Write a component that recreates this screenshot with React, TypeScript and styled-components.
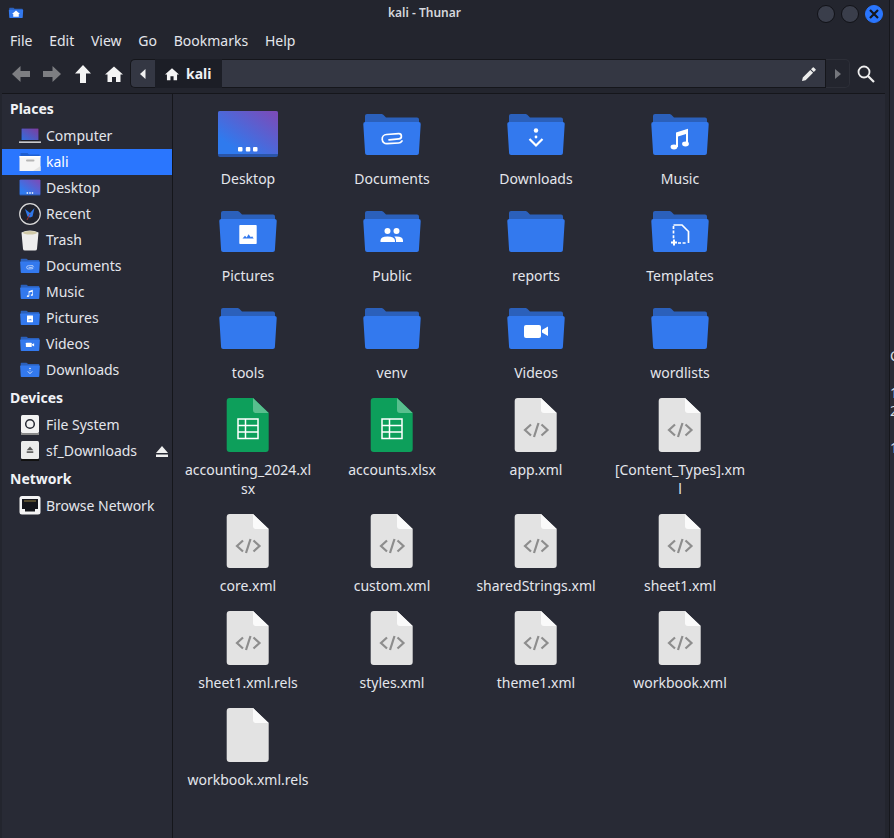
import { ReactNode } from "react";
import styled, { createGlobalStyle } from "styled-components";

const GlobalStyle = createGlobalStyle`
    html, body {
        margin: 0;
        padding: 0;
        background-color: #2a2c36;
    }
    * {
        box-sizing: border-box;
    }
`;

const FolderIcon = ({ size = 64, children }: { size?: number; children?: ReactNode }) => (
    <svg width={size} height={size} viewBox="0 0 64 64">
        <path d="M5 13q0-2 2-2h14.500q1 0 1.800.8l2.700 2.700h31q2 0 2 2v6H5z" fill="#2b60bb" />
        <path d="M5.300 19h53.400q2.200 0 2 2.200l-1.800 29q-.1 1.800-2 1.800H7.100q-1.900 0-2-1.800l-1.800-29q-.2-2.200 2-2.200z" fill="#3379ee" />
        {children}
    </svg>
);

const DesktopIcon = ({ size = 64 }: { size?: number }) => (
    <svg width={size} height={size} viewBox="0 0 64 64">
        <defs>
            <linearGradient id="desk" x1="0" y1="1" x2="1" y2="0">
                <stop offset="0.2" stopColor="#2f7aee" />
                <stop offset="1" stopColor="#7f49b6" />
            </linearGradient>
        </defs>
        <rect x="2" y="8" width="60" height="46" rx="2" fill="#2a55a8" />
        <path d="M2 10q0-2 2-2h56q2 0 2 2v41H2z" fill="url(#desk)" />
        <rect x="22" y="44" width="4.500" height="4.500" rx="1" fill="#fff" />
        <rect x="29.800" y="44" width="4.500" height="4.500" rx="1" fill="#fff" />
        <rect x="37" y="44" width="4.500" height="4.500" rx="1" fill="#fff" />
    </svg>
);

const DocIcon = ({ children }: { children?: ReactNode }) => (
    <svg width="64" height="64" viewBox="0 0 64 64">
        <path d="M13.700 4H37l15.700 15v36q0 3-3 3h-36q-3 0-3-3V7q0-3 3-3z" fill="#e3e3e3" />
        <path d="M37 4l15.700 15H40q-3 0-3-3z" fill="#fafafa" />
        {children}
    </svg>
);

const CodeGlyph = () => (
    <g fill="none" stroke="#8d8d8d" strokeWidth="2.200">
        <path d="M27 30.500l-6 5.500 6 5.500" />
        <path d="M37.500 30.500l6 5.500-6 5.500" />
        <path d="M34.500 29l-4.500 14" />
    </g>
);

const SheetIcon = () => (
    <svg width="64" height="64" viewBox="0 0 64 64">
        <path d="M13.700 4H37l15.700 15v36q0 3-3 3h-36q-3 0-3-3V7q0-3 3-3z" fill="#0d9f5b" />
        <path d="M37 4l15.700 15H40q-3 0-3-3z" fill="#58bf8e" />
        <g fill="none" stroke="#fff" strokeWidth="1.500">
            <rect x="22" y="25" width="20" height="19.500" />
            <path d="M22 31.500h20M22 38h20M29.500 25v19.500" />
        </g>
    </svg>
);

const PaperclipGlyph = () => (
    <path d="M29 36.800L39 35.800a2.600 2.600 0 0 0-.4-5.200L26.500 31.500a4.600 4.600 0 0 0 .6 9.200L38.500 40a4.600 4.600 0 0 0 3.500-2" fill="none" stroke="#fff" strokeWidth="1.700" strokeLinecap="round" />
);

const DownloadGlyph = () => (
    <g>
        <circle cx="32" cy="27.500" r="2.200" fill="#fff" />
        <circle cx="32" cy="34" r="1.400" fill="#fff" />
        <path d="M25.500 36l6.500 6.500 6.500-6.500" fill="none" stroke="#fff" strokeWidth="2.200" />
    </g>
);

const MusicGlyph = () => (
    <g>
        <path d="M28 29.500l12-3.800V41h-2V31l-8 2.400V44h-2V30.800q0-.9 0-1.300z" fill="#fff" />
        <ellipse cx="26" cy="44" rx="3.400" ry="2.400" fill="#fff" />
        <ellipse cx="37.500" cy="41" rx="3.400" ry="2.400" fill="#fff" />
    </g>
);

const PictureGlyph = () => (
    <g>
        <rect x="23.300" y="25" width="17.400" height="19" rx="0.800" fill="#fff" />
        <path d="M26.500 38.500l2.500-2.700 1.700 1.600 1.800-3.200 2.400 3 1.200-1 1.600 2.300z" fill="#3379ee" />
    </g>
);

const PeopleGlyph = () => (
    <g fill="#fff">
        <circle cx="27.500" cy="31" r="3" />
        <circle cx="36.500" cy="31" r="3" />
        <path d="M20.500 42v-1.500q0-4 7-4t7.500 4V42z" />
        <path d="M36 42v-1.500q0-2.500-1.700-4 .9-.1 2.200-.1 6.500 0 6.500 4V42z" />
    </g>
);

const TemplateGlyph = () => (
    <g fill="none" stroke="#fff" strokeWidth="1.700">
        <path d="M25.500 25h8.500l6.500 6.500V43" />
        <path d="M25.500 26v13M30 43h9" strokeDasharray="3 1.600" />
        <path d="M23 42.500h6M26 39.500v6" strokeWidth="2" />
    </g>
);

const VideoGlyph = () => (
    <g fill="#fff">
        <rect x="20" y="28" width="17" height="13" rx="2" />
        <path d="M38 33l6-3.500v9.500l-6-3.500z" />
    </g>
);

const LaptopIcon = () => (
    <svg width="22" height="22" viewBox="0 0 22 22">
        <defs>
            <linearGradient id="lap" x1="0" y1="1" x2="1" y2="0">
                <stop offset="0" stopColor="#2f6fe0" />
                <stop offset="1" stopColor="#7f3c9c" />
            </linearGradient>
        </defs>
        <rect x="2" y="3" width="18" height="13" fill="#1d1e26" />
        <rect x="2.500" y="3.500" width="17" height="11.500" fill="url(#lap)" />
        <rect x="0" y="16.500" width="22" height="1.300" fill="#f2f2f2" />
    </svg>
);

const HomeFolderIcon = () => (
    <svg width="22" height="22" viewBox="0 0 22 22">
        <path d="M1.500 2h7l1.500 1.500h10.500V7h-19z" fill="#1f5fd0" />
        <rect x="0.500" y="5" width="21" height="15" fill="#f5f5f5" />
        <path d="M0.500 6.500h21V5h-21z" fill="#fff" />
        <rect x="7" y="8.500" width="8.500" height="2" rx="1" fill="#b5b5b5" />
        <path d="M14 20l7.500-5v5z" fill="#e3e3e3" />
    </svg>
);

const ClockIcon = () => (
    <svg width="22" height="22" viewBox="0 0 22 22">
        <circle cx="11" cy="11" r="10.300" fill="#20222c" stroke="#d8d8d8" strokeWidth="1.200" />
        <path d="M6 6l5 4 4.500-5-2 8.500-2.500 1-2.500-1z" fill="#2f78ea" />
        <path d="M11 11l-3 6" stroke="#b03030" strokeWidth="0.900" />
    </svg>
);

const TrashIcon = () => (
    <svg width="22" height="22" viewBox="0 0 22 22">
        <path d="M2.500 3.500Q11 -.5 19.500 3.500L18 20q-.2 1.500-2 1.500H6q-1.800 0-2-1.500z" fill="#eeeeee" />
        <ellipse cx="11" cy="3.700" rx="7" ry="1.800" fill="#d0c9a8" />
    </svg>
);

const DiskIcon = () => (
    <svg width="22" height="22" viewBox="0 0 22 22">
        <rect x="2" y="1" width="18" height="18" rx="1.500" fill="#f2f2f2" />
        <rect x="2" y="19" width="18" height="2" fill="#8a8a8a" />
        <circle cx="11" cy="10" r="4.300" fill="none" stroke="#262933" strokeWidth="1.500" />
    </svg>
);

const MountIcon = () => (
    <svg width="22" height="22" viewBox="0 0 22 22">
        <rect x="2" y="1" width="18" height="18" rx="1.500" fill="#ececec" />
        <rect x="2" y="19" width="18" height="2" fill="#111" />
        <path d="M11 6.500l3.300 3.800H7.700z" fill="#555" />
        <rect x="7.700" y="11.300" width="6.600" height="1.600" fill="#555" />
    </svg>
);

const NetworkIcon = () => (
    <svg width="22" height="22" viewBox="0 0 22 22">
        <rect x="0.500" y="1" width="21" height="18.500" rx="2.500" fill="#f4f4f4" />
        <path d="M3 4h16v10h-3v2.500H6V14H3z" fill="#15161b" />
        <path d="M6 5v2M8 5v2M10 5v2M12 5v2M14 5v2M16 5v2" stroke="#b49a4a" strokeWidth="0.800" />
    </svg>
);

const Arrow = ({ rotate, color }: { rotate: number; color: string }) => (
    <svg width="18" height="18" viewBox="0 0 18 18" style={{ transform: `rotate(${rotate}deg)` }}>
        <path d="M0 9L8.500 1v5H18v6H8.500v5z" fill={color} />
    </svg>
);

const HomeGlyph = ({ size }: { size: number }) => (
    <svg width={size} height={size} viewBox="0 0 18 18">
        <path d="M9 1.500L18 9.500h-2.500V17H11v-5H7v5H2.500V9.500H0z" fill="#f4f4f4" />
    </svg>
);

const places = [
    { name: "Computer", icon: <LaptopIcon /> },
    { name: "kali", icon: <HomeFolderIcon />, active: true },
    { name: "Desktop", icon: <DesktopIcon size={22} /> },
    { name: "Recent", icon: <ClockIcon /> },
    { name: "Trash", icon: <TrashIcon /> },
    { name: "Documents", icon: <FolderIcon size={22}><PaperclipGlyph /></FolderIcon> },
    { name: "Music", icon: <FolderIcon size={22}><MusicGlyph /></FolderIcon> },
    { name: "Pictures", icon: <FolderIcon size={22}><PictureGlyph /></FolderIcon> },
    { name: "Videos", icon: <FolderIcon size={22}><VideoGlyph /></FolderIcon> },
    { name: "Downloads", icon: <FolderIcon size={22}><DownloadGlyph /></FolderIcon> },
];

const files = [
    { name: "Desktop", icon: <DesktopIcon /> },
    { name: "Documents", icon: <FolderIcon><PaperclipGlyph /></FolderIcon> },
    { name: "Downloads", icon: <FolderIcon><DownloadGlyph /></FolderIcon> },
    { name: "Music", icon: <FolderIcon><MusicGlyph /></FolderIcon> },
    { name: "Pictures", icon: <FolderIcon><PictureGlyph /></FolderIcon> },
    { name: "Public", icon: <FolderIcon><PeopleGlyph /></FolderIcon> },
    { name: "reports", icon: <FolderIcon /> },
    { name: "Templates", icon: <FolderIcon><TemplateGlyph /></FolderIcon> },
    { name: "tools", icon: <FolderIcon /> },
    { name: "venv", icon: <FolderIcon /> },
    { name: "Videos", icon: <FolderIcon><VideoGlyph /></FolderIcon> },
    { name: "wordlists", icon: <FolderIcon /> },
    { name: "accounting_2024.xlsx", icon: <SheetIcon /> },
    { name: "accounts.xlsx", icon: <SheetIcon /> },
    { name: "app.xml", icon: <DocIcon><CodeGlyph /></DocIcon> },
    { name: "[Content_Types].xml", icon: <DocIcon><CodeGlyph /></DocIcon> },
    { name: "core.xml", icon: <DocIcon><CodeGlyph /></DocIcon> },
    { name: "custom.xml", icon: <DocIcon><CodeGlyph /></DocIcon> },
    { name: "sharedStrings.xml", icon: <DocIcon><CodeGlyph /></DocIcon> },
    { name: "sheet1.xml", icon: <DocIcon><CodeGlyph /></DocIcon> },
    { name: "sheet1.xml.rels", icon: <DocIcon><CodeGlyph /></DocIcon> },
    { name: "styles.xml", icon: <DocIcon><CodeGlyph /></DocIcon> },
    { name: "theme1.xml", icon: <DocIcon><CodeGlyph /></DocIcon> },
    { name: "workbook.xml", icon: <DocIcon><CodeGlyph /></DocIcon> },
    { name: "workbook.xml.rels", icon: <DocIcon /> },
];

const App = () => {
    return (
        <Screen>
            <GlobalStyle />
            <Window>
                <TitleBar>
                    <TitleIcon>
                        <FolderIcon size={16}>
                            <path d="M32 22L48 36h-5v11H21V36h-5z" fill="#fff" />
                        </FolderIcon>
                    </TitleIcon>
                    <Title>kali - Thunar</Title>
                    <WindowButtons>
                        <WindowButton />
                        <WindowButton />
                        <WindowButton $close>
                            <svg width="10" height="10" viewBox="0 0 10 10">
                                <path d="M1 1l8 8M9 1l-8 8" stroke="#14161c" strokeWidth="2.200" />
                            </svg>
                        </WindowButton>
                    </WindowButtons>
                </TitleBar>
                <MenuBar>
                    {["File", "Edit", "View", "Go", "Bookmarks", "Help"].map((m) => (
                        <MenuItem key={m}>{m}</MenuItem>
                    ))}
                </MenuBar>
                <Toolbar>
                    <NavButtons>
                        <Arrow rotate={0} color="#7d7e82" />
                        <Arrow rotate={180} color="#7d7e82" />
                        <Arrow rotate={90} color="#f4f4f4" />
                        <HomeGlyph size={18} />
                    </NavButtons>
                    <PathBar>
                        <PathArrow>
                            <svg width="6" height="10" viewBox="0 0 6 10">
                                <path d="M5.500 0v10L0 5z" fill="#f0f0f0" />
                            </svg>
                        </PathArrow>
                        <PathCrumb>
                            <HomeGlyph size={14} />
                            <span>kali</span>
                        </PathCrumb>
                        <PathEntry>
                            <svg width="14" height="14" viewBox="0 0 14 14">
                                <path d="M0 14l.8-3.600 7.500-7.500 2.800 2.800-7.500 7.500zM9 2.200l1.800-1.800q.5-.4 1 0l1.800 1.800q.4.500 0 1L11.800 5z" fill="#ececec" />
                            </svg>
                        </PathEntry>
                        <PathNext>
                            <svg width="6" height="10" viewBox="0 0 6 10">
                                <path d="M0 0v10l6-5z" fill="#74767c" />
                            </svg>
                        </PathNext>
                    </PathBar>
                    <SearchButton>
                        <svg width="18" height="18" viewBox="0 0 18 18">
                            <circle cx="7" cy="7" r="5.500" fill="none" stroke="#eee" strokeWidth="1.800" />
                            <path d="M11 11l6 6" stroke="#eee" strokeWidth="2.200" />
                        </svg>
                    </SearchButton>
                </Toolbar>
                <Body>
                    <Sidebar>
                        <SideTitle>Places</SideTitle>
                        {places.map((p) => (
                            <SideRow key={p.name} $active={p.active}>
                                <SideIcon>{p.icon}</SideIcon>
                                <SideLabel>{p.name}</SideLabel>
                            </SideRow>
                        ))}
                        <SideTitle>Devices</SideTitle>
                        <SideRow>
                            <SideIcon><DiskIcon /></SideIcon>
                            <SideLabel>File System</SideLabel>
                        </SideRow>
                        <SideRow>
                            <SideIcon><MountIcon /></SideIcon>
                            <SideLabel>sf_Downloads</SideLabel>
                            <Eject>
                                <svg width="12" height="11" viewBox="0 0 12 11">
                                    <path d="M6 0l6 7H0zM0 8.500h12V11H0z" fill="#f0f0f0" />
                                </svg>
                            </Eject>
                        </SideRow>
                        <SideTitle>Network</SideTitle>
                        <SideRow>
                            <SideIcon><NetworkIcon /></SideIcon>
                            <SideLabel>Browse Network</SideLabel>
                        </SideRow>
                    </Sidebar>
                    <Main>
                        <FileGrid>
                            {files.map((f) => (
                                <FileItem key={f.name}>
                                    {f.icon}
                                    <FileName>{f.name}</FileName>
                                </FileItem>
                            ))}
                        </FileGrid>
                    </Main>
                </Body>
            </Window>
            <BehindStrip>
                <BehindLine $gap={347}>C</BehindLine>
                <BehindLine $gap={19}>1</BehindLine>
                <BehindLine $gap={0}>2</BehindLine>
                <BehindLine $gap={19}>1</BehindLine>
            </BehindStrip>
        </Screen>
    );
};

export default App;

const Screen = styled.div`
    display: flex;
    width: 894px;
    height: 838px;
    overflow: hidden;
    font-family: "Noto Sans", sans-serif;
    font-size: 14px;
    color: #e4e6ec;
`;

const Window = styled.div`
    width: 890px;
    height: 838px;
    flex-shrink: 0;
    padding: 0 4px 0 2px;
    background-color: #23252e;
    border-right: 1px solid #16171c;
    display: flex;
    flex-direction: column;
`;

const BehindStrip = styled.div`
    width: 4px;
    overflow: hidden;
    background-color: #2a2c36;
    color: #d8dce0;
`;

const BehindLine = styled.div<{ $gap: number }>`
    margin-top: ${({ $gap }) => $gap}px;
    line-height: 18px;
`;

const TitleBar = styled.div`
    height: 28px;
    flex-shrink: 0;
    display: flex;
    align-items: center;
    position: relative;
`;

const TitleIcon = styled.div`
    display: flex;
    margin: -3px 0 0 6px;
`;

const Title = styled.div`
    position: absolute;
    left: 386px;
    top: 4px;
    font-size: 12px;
    font-weight: 600;
    color: #d5d7dd;
`;

const WindowButtons = styled.div`
    margin-left: auto;
    display: flex;
    gap: 6px;
    margin-right: 2px;
`;

const WindowButton = styled.div<{ $close?: boolean }>`
    width: 18px;
    height: 18px;
    border-radius: 50%;
    border: 1px solid ${({ $close }) => ($close ? "#2a76fe" : "#111217")};
    background-color: ${({ $close }) => ($close ? "#2a76fe" : "#3a3e4b")};
    display: flex;
    align-items: center;
    justify-content: center;
`;

const MenuBar = styled.div`
    height: 24px;
    flex-shrink: 0;
    display: flex;
    align-items: center;
    gap: 16.75px;
    padding-left: 8px;
`;

const MenuItem = styled.span``;

const Toolbar = styled.div`
    height: 42px;
    flex-shrink: 0;
    padding-top: 2px;
    display: flex;
    align-items: center;
    border-bottom: 1px solid #15161b;
`;

const NavButtons = styled.div`
    display: flex;
    gap: 13px;
    padding-left: 10px;
    width: 128px;
    flex-shrink: 0;
`;

const PathBar = styled.div`
    display: flex;
    height: 29px;
    width: 720px;
    flex-shrink: 0;
`;

const PathArrow = styled.div`
    width: 25px;
    background-color: #343743;
    border: 1px solid #15161b;
    border-right: none;
    border-radius: 5px 0 0 5px;
    display: flex;
    align-items: center;
    justify-content: center;
`;

const PathCrumb = styled.div`
    width: 67px;
    background-color: #1c1e26;
    display: flex;
    align-items: center;
    gap: 7px;
    padding-left: 10px;
    font-weight: 700;
    color: #eef0f4;
`;

const PathEntry = styled.div`
    flex: 1;
    background-color: #343743;
    border: 1px solid #15161b;
    border-left: none;
    display: flex;
    align-items: center;
    justify-content: flex-end;
    padding-right: 9px;
`;

const PathNext = styled.div`
    width: 24px;
    border: 1px solid #2d2f38;
    border-left: none;
    border-radius: 0 5px 5px 0;
    display: flex;
    align-items: center;
    justify-content: center;
`;

const SearchButton = styled.div`
    display: flex;
    margin-left: 7px;
`;

const Body = styled.div`
    flex: 1;
    min-height: 0;
    display: flex;
    background-color: #282a35;
`;

const Sidebar = styled.div`
    width: 171px;
    flex-shrink: 0;
    border-right: 1px solid #15161b;
`;

const SideTitle = styled.div`
    height: 29px;
    padding-left: 8px;
    display: flex;
    align-items: center;
    font-weight: 700;
    color: #f0f2f6;
`;

const SideRow = styled.div<{ $active?: boolean }>`
    height: 26px;
    padding-left: 17px;
    display: flex;
    align-items: center;
    gap: 5px;
    background-color: ${({ $active }) => ($active ? "#2a76fe" : "transparent")};
    color: ${({ $active }) => ($active ? "#ffffff" : "#e4e6ec")};
`;

const SideIcon = styled.div`
    width: 22px;
    height: 22px;
    display: flex;
`;

const SideLabel = styled.span`
    padding-bottom: 2px;
`;

const Eject = styled.div`
    margin-left: auto;
    margin-right: 4px;
    display: flex;
`;

const Main = styled.div`
    flex: 1;
    padding: 9px 0 0 3px;
`;

const FileGrid = styled.div`
    display: grid;
    grid-template-columns: repeat(4, 144px);
    row-gap: 12px;
    align-items: start;
`;

const FileItem = styled.div`
    display: flex;
    flex-direction: column;
    align-items: center;
`;

const FileName = styled.div`
    width: 132px;
    margin-top: 2px;
    line-height: 19px;
    text-align: center;
    word-break: break-all;
`;
